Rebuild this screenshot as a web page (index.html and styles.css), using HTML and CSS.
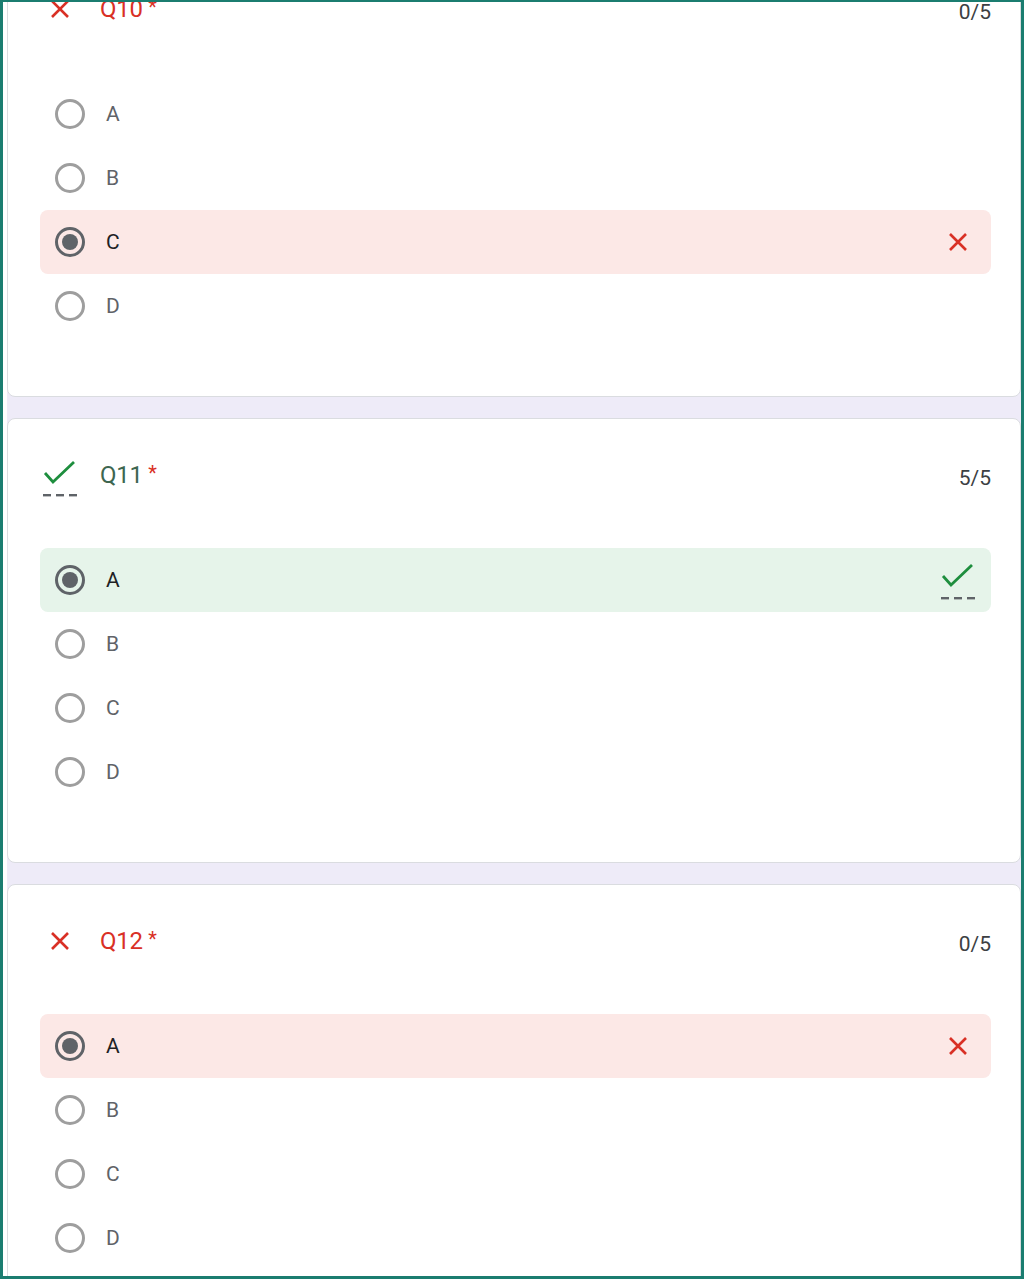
FILE: index.html
```html
<!DOCTYPE html>
<html>
<head>
<meta charset="utf-8">
<link rel="stylesheet" href="styles.css">
</head>
<body>
<div class="frame">
  <div class="page">
    <div class="list">
      <section class="card">
        <div class="qhead">
          <div class="qicon"><svg class="xicon" viewBox="0 0 24 24" width="24" height="24"><path d="M4 4 L20 20 M20 4 L4 20"/></svg></div>
          <div class="qtitle wrong">Q10 <span class="req">*</span></div>
          <div class="score">0/5</div>
        </div>
        <div class="opts">
          <div class="opt"><span class="radio"></span><span class="lbl">A</span></div>
          <div class="opt"><span class="radio"></span><span class="lbl">B</span></div>
          <div class="opt sel bad"><span class="radio on"></span><span class="lbl">C</span><span class="mark"><svg class="xicon" viewBox="0 0 24 24" width="24" height="24"><path d="M4 4 L20 20 M20 4 L4 20"/></svg></span></div>
          <div class="opt"><span class="radio"></span><span class="lbl">D</span></div>
        </div>
      </section>
      <section class="card">
        <div class="qhead">
          <div class="qicon top"><svg class="ckicon" viewBox="0 0 36 36" width="36" height="36"><path class="ck" d="M3 12 L11 21 L32 1"/><rect x="1" y="33" width="8" height="2.4"/><rect x="14" y="33" width="8" height="2.4"/><rect x="27" y="33" width="8" height="2.4"/></svg></div>
          <div class="qtitle right">Q11 <span class="req">*</span></div>
          <div class="score">5/5</div>
        </div>
        <div class="opts">
          <div class="opt sel good"><span class="radio on"></span><span class="lbl">A</span><span class="mark cktop"><svg class="ckicon" viewBox="0 0 36 36" width="36" height="36"><path class="ck" d="M3 12 L11 21 L32 1"/><rect x="1" y="33" width="8" height="2.4"/><rect x="14" y="33" width="8" height="2.4"/><rect x="27" y="33" width="8" height="2.4"/></svg></span></div>
          <div class="opt"><span class="radio"></span><span class="lbl">B</span></div>
          <div class="opt"><span class="radio"></span><span class="lbl">C</span></div>
          <div class="opt"><span class="radio"></span><span class="lbl">D</span></div>
        </div>
      </section>
      <section class="card">
        <div class="qhead">
          <div class="qicon"><svg class="xicon" viewBox="0 0 24 24" width="24" height="24"><path d="M4 4 L20 20 M20 4 L4 20"/></svg></div>
          <div class="qtitle wrong">Q12 <span class="req">*</span></div>
          <div class="score">0/5</div>
        </div>
        <div class="opts">
          <div class="opt sel bad"><span class="radio on"></span><span class="lbl">A</span><span class="mark"><svg class="xicon" viewBox="0 0 24 24" width="24" height="24"><path d="M4 4 L20 20 M20 4 L4 20"/></svg></span></div>
          <div class="opt"><span class="radio"></span><span class="lbl">B</span></div>
          <div class="opt"><span class="radio"></span><span class="lbl">C</span></div>
          <div class="opt"><span class="radio"></span><span class="lbl">D</span></div>
        </div>
      </section>
    </div>
  </div>
</div>
</body>
</html>
```
FILE: styles.css
```css
html, body {
  margin: 0;
  padding: 0;
  background: #ffffff;
}
.frame {
  width: 1024px;
  height: 1279px;
  box-sizing: border-box;
  border: 3px solid #1b7d70;
  border-top-width: 2px;
  padding-left: 4px;
  overflow: hidden;
  background: #ffffff;
  font-family: Roboto, "Open Sans", Arial, sans-serif;
}
.page {
  height: 100%;
  background: #eeebf8;
  overflow: hidden;
}
.list {
  margin-top: -50px;
  display: flex;
  flex-direction: column;
  gap: 21px;
}
.card {
  background: #ffffff;
  border: 1px solid #dadce0;
  border-radius: 8px;
  padding: 40px 29px 58px 32px;
}
.qhead {
  display: flex;
  align-items: center;
  height: 32px;
}
.qicon {
  width: 40px;
  height: 32px;
  display: flex;
  align-items: center;
  justify-content: center;
  margin-right: 20px;
}
.qicon.top {
  align-items: flex-start;
  padding-top: 2px;
  box-sizing: border-box;
}
.qicon svg, .mark svg {
  display: block;
  overflow: visible;
}
.xicon path {
  stroke: #d93025;
  stroke-width: 2.6;
  fill: none;
}
.ckicon .ck {
  stroke: #1e8e3e;
  stroke-width: 2.8;
  fill: none;
}
.ckicon rect {
  fill: #5f6368;
}
.qtitle {
  flex: 1;
  font-size: 24px;
  letter-spacing: -0.3px;
}
.qtitle.wrong {
  color: #d93025;
}
.qtitle.right {
  color: #3d6650;
}
.req {
  color: #d93025;
  font-size: 20px;
  vertical-align: 3px;
}
.score {
  font-size: 21px;
  color: #3c4043;
  padding-top: 6px;
}
.opts {
  margin-top: 57px;
  display: flex;
  flex-direction: column;
}
.opt {
  height: 64px;
  display: flex;
  align-items: center;
  padding: 0 15px;
  border-radius: 8px;
}
.opt.bad {
  background: #fce8e6;
}
.opt.good {
  background: #e6f4ea;
}
.radio {
  width: 30px;
  height: 30px;
  box-sizing: border-box;
  border: 3px solid #9e9e9e;
  border-radius: 50%;
  margin-right: 21px;
  flex: none;
  position: relative;
}
.radio.on {
  border-color: #5f6368;
}
.radio.on::after {
  content: "";
  position: absolute;
  left: 4px;
  top: 4px;
  width: 16px;
  height: 16px;
  border-radius: 50%;
  background: #5f6368;
}
.lbl {
  flex: 1;
  font-size: 21px;
  color: #5f6368;
}
.sel .lbl {
  color: #202124;
}
.mark {
  width: 36px;
  height: 36px;
  display: flex;
  align-items: center;
  justify-content: center;
}
.mark.cktop {
  align-self: flex-start;
  margin-top: 16px;
}
```
